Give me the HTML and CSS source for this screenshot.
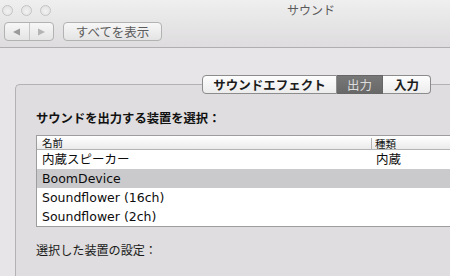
FILE: index.html
```html
<!DOCTYPE html>
<html lang="ja">
<head>
<meta charset="utf-8">
<title>サウンド</title>
<link rel="stylesheet" href="styles.css">
</head>
<body>
<div class="window">
  <header class="titlebar">
    <div class="titlerow">
      <div class="lights">
        <span class="light"></span><span class="light"></span><span class="light"></span>
      </div>
      <div class="title">サウンド</div>
    </div>
    <div class="toolbar">
      <div class="navseg">
        <span class="navbtn"><svg width="9" height="8" viewBox="0 0 9 8"><path d="M1 4 L8 0.5 L8 7.5 Z" fill="#9a9a9a"/></svg></span>
        <span class="navbtn"><svg width="9" height="8" viewBox="0 0 9 8"><path d="M8 4 L1 0.5 L1 7.5 Z" fill="#b4b4b4"/></svg></span>
      </div>
      <div class="showall">すべてを表示</div>
    </div>
  </header>
  <main class="content">
    <div class="tabs">
      <span class="tab">サウンドエフェクト</span>
      <span class="tab tab-selected">出力</span>
      <span class="tab">入力</span>
    </div>
    <section class="panel">
      <div class="label">サウンドを出力する装置を選択：</div>
      <div class="table">
        <div class="thead">
          <span class="col-name">名前</span>
          <span class="col-type">種類</span>
        </div>
        <div class="row"><span class="col-name">内蔵スピーカー</span><span class="col-type">内蔵</span></div>
        <div class="row row-selected"><span class="col-name">BoomDevice</span><span class="col-type"></span></div>
        <div class="row"><span class="col-name">Soundflower (16ch)</span><span class="col-type"></span></div>
        <div class="row"><span class="col-name">Soundflower (2ch)</span><span class="col-type"></span></div>
      </div>
      <div class="sublabel">選択した装置の設定：</div>
    </section>
  </main>
</div>
</body>
</html>
```
FILE: styles.css
```css
html, body {
  margin: 0;
  padding: 0;
}
body {
  width: 450px;
  height: 276px;
  overflow: hidden;
  background: #e6e4e6;
  font-family: "Noto Sans CJK JP", sans-serif;
}
.window {
  width: 450px;
  height: 276px;
  overflow: hidden;
  display: flex;
  flex-direction: column;
  background: #e7e5e7;
}
.titlebar {
  height: 48px;
  flex: none;
  box-sizing: border-box;
  background: linear-gradient(#efefef, #dedcde);
  border-bottom: 1px solid #b0aeb0;
}
.titlerow {
  height: 19px;
  display: flex;
  align-items: center;
}
.lights {
  display: flex;
  gap: 8px;
  padding-left: 2px;
  padding-top: 1px;
}
.light {
  width: 9px;
  height: 9px;
  border-radius: 50%;
  border: 1px solid #c4c4c4;
  background: radial-gradient(circle at 50% 60%, #f2f2f2, #dedede);
}
.title {
  padding-left: 236px;
  font-size: 12px;
  color: #5a5a5a;
  line-height: 16px;
}
.toolbar {
  display: flex;
  align-items: center;
  gap: 9px;
  padding-left: 4px;
  padding-top: 3px;
}
.navseg {
  display: flex;
  width: 50px;
  height: 19px;
  box-sizing: border-box;
  border: 1px solid #b2b2b2;
  border-radius: 4px;
  background: linear-gradient(#f7f7f7, #e4e4e4);
}
.navbtn {
  flex: 1;
  display: flex;
  align-items: center;
  justify-content: center;
}
.navbtn + .navbtn {
  border-left: 1px solid #c6c6c6;
}
.showall {
  width: 99px;
  height: 19px;
  box-sizing: border-box;
  border: 1px solid #b2b2b2;
  border-radius: 4px;
  background: linear-gradient(#f7f7f7, #e4e4e4);
  font-size: 12.5px;
  line-height: 17px;
  color: #5c5c5c;
  text-align: center;
}
.content {
  flex: 1;
  display: flex;
  flex-direction: column;
  padding: 27px 0 0 15px;
}
.tabs {
  display: flex;
  justify-content: flex-end;
  padding-right: 19px;
  position: relative;
  z-index: 1;
  margin-bottom: -10px;
}
.tab {
  height: 19px;
  box-sizing: border-box;
  border: 1px solid #8c8c8c;
  border-left: none;
  background: linear-gradient(#fdfdfd, #ececec);
  font-size: 12.5px;
  font-weight: bold;
  line-height: 17px;
  color: #1c1c1c;
  text-align: center;
}
.tab:nth-child(1) {
  width: 135px;
  border-left: 1px solid #8c8c8c;
  border-radius: 4px 0 0 4px;
}
.tab:nth-child(2) {
  width: 46px;
}
.tab:nth-child(3) {
  width: 48px;
  border-radius: 0 4px 4px 0;
}
.tab-selected {
  background: linear-gradient(#777777, #686868);
  color: #dcdcdc;
  font-weight: normal;
  border-color: #666;
}
.panel {
  flex: 1;
  border: 1px solid #b3b1b3;
  border-right: none;
  border-bottom: none;
  border-radius: 5px 0 0 0;
  background: #dfdddf;
  padding: 25px 0 0 20px;
}
.label {
  font-size: 12.3px;
  font-weight: bold;
  line-height: 16px;
  color: #111;
}
.table {
  margin-top: 9px;
  border: 1px solid #9d9d9d;
  border-right: none;
  background: #fff;
}
.thead {
  display: flex;
  height: 13px;
  border-bottom: 1px solid #b4b4b4;
  background: linear-gradient(#ffffff, #ebebeb);
  font-size: 10.5px;
  line-height: 13px;
  color: #111;
}
.thead .col-type {
  border-left: 1px solid #b4b4b4;
  padding-left: 3px;
  margin-top: 2px;
  line-height: 11px;
  height: 11px;
}
.col-name {
  width: 329px;
  padding-left: 5px;
  flex: none;
}
.col-type {
  flex: 1;
  padding-left: 4px;
}
.row {
  display: flex;
  height: 19px;
  font-family: "DejaVu Sans", "Noto Sans CJK JP", sans-serif;
  font-size: 12.5px;
  line-height: 20px;
  color: #0c0c0c;
}
.row .col-type {
  padding-left: 5px;
}
.row-selected {
  background: #cacacc;
}
.sublabel {
  margin-top: 15px;
  font-size: 12.1px;
  line-height: 16px;
  color: #1a1a1a;
}
```
